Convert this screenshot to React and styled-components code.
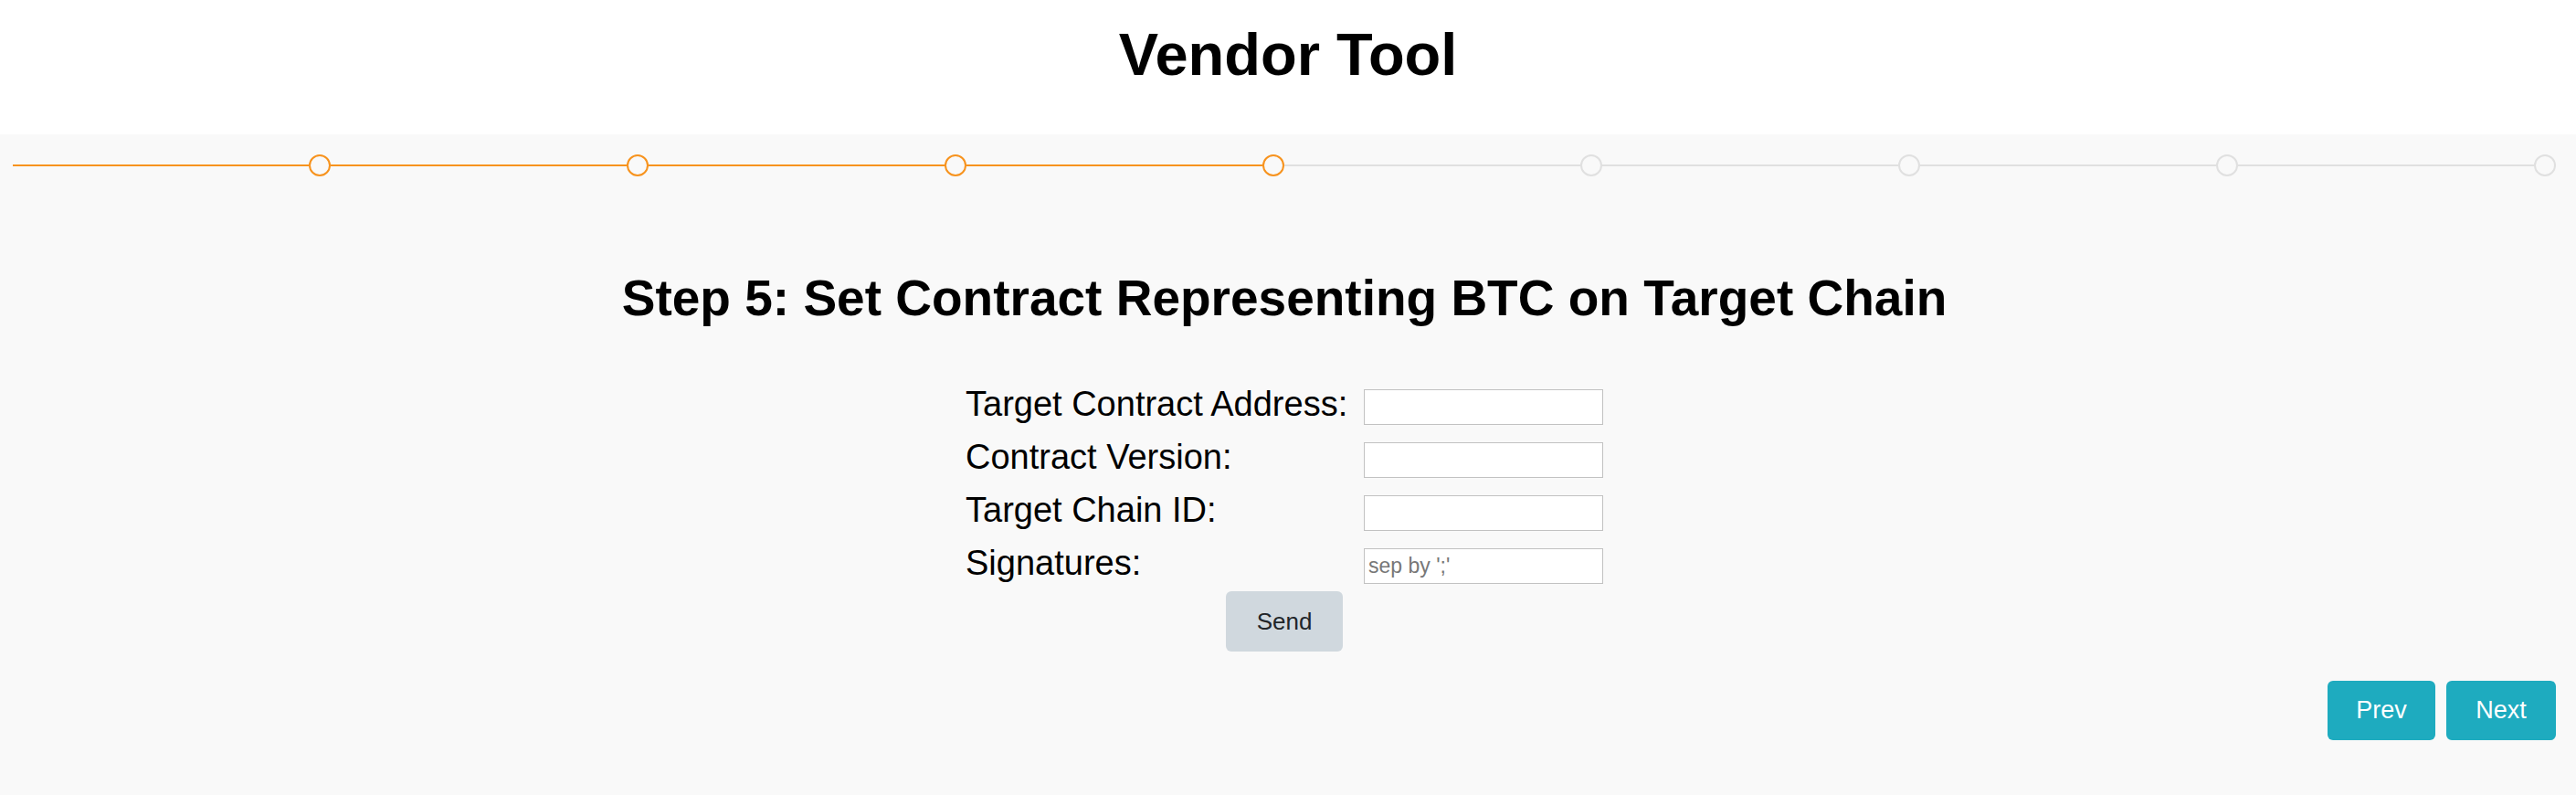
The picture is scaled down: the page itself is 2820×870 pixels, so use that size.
import React from 'react';
import styled, { createGlobalStyle } from 'styled-components';

const ORANGE = '#f7931e';
const GREY = '#e0e0e0';

const GlobalStyle = createGlobalStyle`
  body {
    margin: 0;
    font-family: 'Liberation Sans', Arial, sans-serif;
    color: #000;
  }
`;

const Page = styled.div`
  display: flex;
  flex-direction: column;
  min-height: 100vh;
`;

const Header = styled.header`
  height: 147px;
  background: #fff;
  text-align: center;
`;

const Title = styled.h1`
  margin: 0;
  padding-top: 27px;
  font-size: 65px;
  line-height: 1;
  font-weight: 700;
`;

const Main = styled.main`
  flex: 1;
  background: #f9f9f9;
  padding: 22px 22px 0 14px;
`;

const Stepper = styled.div`
  display: flex;
`;

const Step = styled.div`
  flex: 1;
  display: flex;
  align-items: center;
`;

const Line = styled.div`
  flex: 1;
  height: 2px;
  background: ${props => (props.done ? ORANGE : GREY)};
`;

const Dot = styled.div`
  box-sizing: border-box;
  width: 24px;
  height: 24px;
  border-radius: 50%;
  border: 2px solid ${props => (props.done ? ORANGE : GREY)};
`;

const StepTitle = styled.h2`
  margin: 106px 0 0;
  text-align: center;
  font-size: 55px;
  line-height: 1;
  font-weight: 700;
`;

const Form = styled.div`
  display: grid;
  grid-template-columns: 421px 262px;
  grid-auto-rows: 39px;
  column-gap: 15px;
  row-gap: 19px;
  justify-content: center;
  margin-top: 72px;
`;

const Label = styled.label`
  font-size: 38px;
  line-height: 33px;
  white-space: nowrap;
`;

const Input = styled.input`
  box-sizing: border-box;
  width: 262px;
  height: 39px;
  margin: 0;
  padding: 0 4px;
  border: 1px solid #c2c2c2;
  background: #fff;
  font-family: 'Liberation Sans', Arial, sans-serif;
  font-size: 23px;
  outline: none;

  &::placeholder {
    color: #777;
  }
`;

const SendRow = styled.div`
  display: flex;
  justify-content: center;
  margin-top: 8px;
`;

const SendButton = styled.button`
  width: 128px;
  height: 66px;
  border: none;
  border-radius: 6px;
  background: #d0d8de;
  color: #212529;
  font-family: 'Liberation Sans', Arial, sans-serif;
  font-size: 26px;
`;

const Nav = styled.div`
  display: flex;
  justify-content: flex-end;
  gap: 12px;
  margin-top: 32px;
`;

const NavButton = styled.button`
  width: ${props => props.width}px;
  height: 65px;
  padding: 0;
  border: none;
  border-radius: 6px;
  background: #1eabbf;
  color: #fff;
  font-family: 'Liberation Sans', Arial, sans-serif;
  font-size: 27px;
`;

const fields = [
  { label: 'Target Contract Address:' },
  { label: 'Contract Version:' },
  { label: 'Target Chain ID:' },
  { label: 'Signatures:', placeholder: "sep by ';'" }
];

const STEPS = 8;
const CURRENT = 4;

export default function App() {
  return (
    <Page>
      <GlobalStyle />
      <Header>
        <Title>Vendor Tool</Title>
      </Header>
      <Main>
        <Stepper>
          {Array.from({ length: STEPS }).map((_, i) => (
            <Step key={i}>
              <Line done={i < CURRENT} />
              <Dot done={i < CURRENT} />
            </Step>
          ))}
        </Stepper>
        <StepTitle>Step 5: Set Contract Representing BTC on Target Chain</StepTitle>
        <Form>
          {fields.map(f => (
            <React.Fragment key={f.label}>
              <Label>{f.label}</Label>
              <Input placeholder={f.placeholder} />
            </React.Fragment>
          ))}
        </Form>
        <SendRow>
          <SendButton>Send</SendButton>
        </SendRow>
        <Nav>
          <NavButton width={118}>Prev</NavButton>
          <NavButton width={120}>Next</NavButton>
        </Nav>
      </Main>
    </Page>
  );
}
